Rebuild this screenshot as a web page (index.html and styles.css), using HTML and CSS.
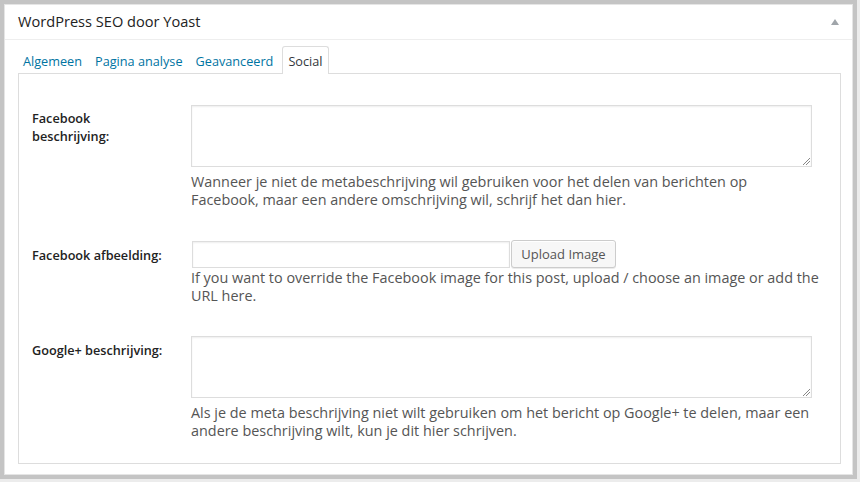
FILE: index.html
```html
<!DOCTYPE html>
<html lang="nl">
<head>
<meta charset="utf-8">
<title>WordPress SEO door Yoast</title>
<link rel="stylesheet" href="styles.css">
</head>
<body>
<div class="frame">
  <div class="postbox">
    <div class="hndle">
      <h3>WordPress SEO door Yoast</h3>
      <svg class="toggle" width="8" height="6" viewBox="0 0 8 6"><polygon points="4,0 8,6 0,6" fill="#a0a5aa"/></svg>
    </div>
    <div class="inside">
      <ul class="tabs">
        <li><a>Algemeen</a></li>
        <li><a>Pagina analyse</a></li>
        <li><a>Geavanceerd</a></li>
        <li class="active"><a>Social</a></li>
      </ul>
      <div class="panel">
        <div class="row">
          <label class="lbl">Facebook<br>beschrijving:</label>
          <div class="field">
            <div class="textarea"><span class="grip"></span></div>
            <p class="desc">Wanneer je niet de metabeschrijving wil gebruiken voor het delen van berichten op<br>Facebook, maar een andere omschrijving wil, schrijf het dan hier.</p>
          </div>
        </div>
        <div class="row row-img">
          <label class="lbl">Facebook afbeelding:</label>
          <div class="field">
            <div class="inline">
              <div class="input"></div>
              <button class="button">Upload Image</button>
            </div>
            <p class="desc desc-tight">If you want to override the Facebook image for this post, upload / choose an image or add the URL here.</p>
          </div>
        </div>
        <div class="row row-last">
          <label class="lbl">Google+ beschrijving:</label>
          <div class="field">
            <div class="textarea"><span class="grip"></span></div>
            <p class="desc">Als je de meta beschrijving niet wilt gebruiken om het bericht op Google+ te delen, maar een andere beschrijving wilt, kun je dit hier schrijven.</p>
          </div>
        </div>
      </div>
    </div>
  </div>
</div>
</body>
</html>
```

FILE: styles.css
```css
* { box-sizing: border-box; }
html, body { margin: 0; padding: 0; }
body {
  width: 860px;
  height: 482px;
  background: #ececec;
  font-family: "Open Sans", "Liberation Sans", sans-serif;
  color: #444;
  overflow: hidden;
}
.frame {
  width: 857px;
  height: 479px;
  border: 4px solid #c4c4c4;
  background: #f1f1f1;
}
.postbox {
  width: 849px;
  height: 471px;
  background: #fff;
  border: 1px solid #e5e5e5;
}
.hndle {
  height: 35px;
  border-bottom: 1px solid #eee;
  display: flex;
  align-items: center;
  justify-content: space-between;
  padding: 0 12px 0 13px;
}
.hndle h3 {
  margin: -1px 0 0 0;
  font-size: 14.6px;
  font-weight: 400;
  color: #222;
  line-height: 19px;
}
.toggle { margin-right: 1px; margin-top: -1px; }
.inside {
  padding: 6px 11px 0 11px;
}
.tabs {
  list-style: none;
  margin: 0;
  padding: 0;
  display: flex;
  height: 28px;
  position: relative;
  z-index: 1;
}
.tabs li {
  border: 1px solid transparent;
  border-bottom: none;
  padding: 0 5px 0 6px;
  font-size: 12.7px;
  line-height: 28px;
  height: 28px;
}
.tabs a { color: #0074a2; }
.tabs li.active {
  border-color: #ddd;
  background: #fff;
  border-radius: 3px 3px 0 0;
  margin-left: 3px;
  padding: 0 5px 0 5px;
}
.tabs li.active a { color: #32373c; }
.panel {
  margin-left: 2px;
  margin-top: -1px;
  width: 823px;
  height: 391px;
  border: 1px solid #ddd;
  padding: 31px 0 0 13px;
}
.row {
  display: grid;
  grid-template-columns: 159px 640px;
  margin-bottom: 31px;
}
.row-last { margin-bottom: 0; }
.lbl {
  font-size: 12.7px;
  font-weight: 600;
  color: #222;
  line-height: 18px;
  padding-top: 4px;
}
.row-img .lbl { padding-top: 6px; }
.row-last .lbl { padding-top: 5px; }
.textarea {
  width: 621px;
  height: 62px;
  border: 1px solid #ddd;
  box-shadow: inset 0 1px 2px rgba(0,0,0,0.07);
  position: relative;
}
.grip {
  position: absolute;
  right: 1px;
  bottom: 1px;
  width: 7px;
  height: 7px;
  background: linear-gradient(135deg, transparent 45%, #888 45%, #888 52%, transparent 52%, transparent 70%, #888 70%, #888 78%, transparent 78%);
}
.desc {
  margin: 6px 0 0 0;
  font-size: 14.4px;
  line-height: 18px;
  color: #555;
  width: 632px;
}
.desc-tight { margin-top: 1px; }
.inline {
  display: flex;
  align-items: flex-end;
  margin-left: 1px;
}
.input {
  width: 318px;
  height: 27px;
  border: 1px solid #ddd;
  box-shadow: inset 0 1px 2px rgba(0,0,0,0.07);
}
.button {
  margin-left: 1px;
  height: 28px;
  width: 105px;
  padding: 0;
  white-space: nowrap;
  font-family: "Open Sans", "Liberation Sans", sans-serif;
  font-size: 13px;
  color: #555;
  background: #f7f7f7;
  border: 1px solid #ccc;
  border-radius: 3px;
  box-shadow: inset 0 1px 0 #fff, 0 1px 0 rgba(0,0,0,0.08);
}
```
